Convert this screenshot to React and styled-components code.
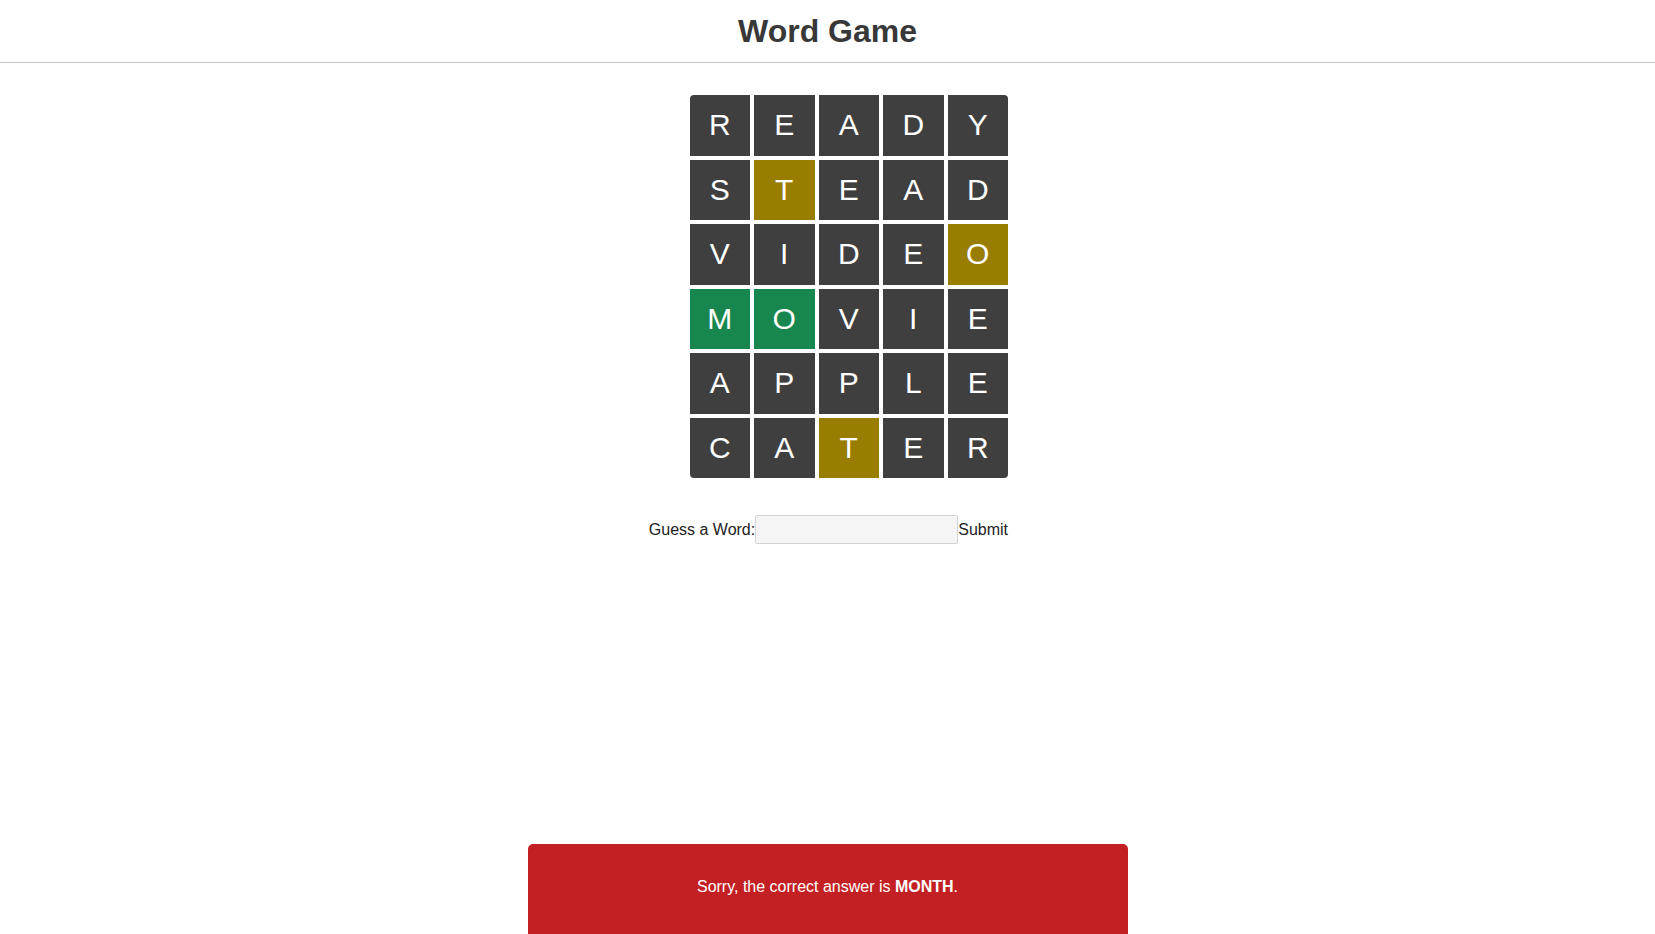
import styled, { createGlobalStyle } from "styled-components";

const GlobalStyle = createGlobalStyle`
  body {
    margin: 0;
    font-family: "Liberation Sans", Arial, sans-serif;
    background: #ffffff;
    color: #222;
    overflow: hidden;
  }
`;

const guesses = [
  ["READY", "....."],
  ["STEAD", ".y..."],
  ["VIDEO", "....y"],
  ["MOVIE", "gg..."],
  ["APPLE", "....."],
  ["CATER", "..y.."],
];

const tileColors = {
  ".": "#3f3f3f",
  y: "#997d00",
  g: "#18874f",
};

const App = () => {
  return (
    <Page>
      <GlobalStyle />
      <Header>
        <Title>Word Game</Title>
      </Header>
      <Main>
        <Board>
          {guesses.map(([word, marks], r) =>
            word.split("").map((ch, c) => (
              <Tile key={`${r}-${c}`} $state={marks[c]}>
                {ch}
              </Tile>
            ))
          )}
        </Board>
        <GuessForm onSubmit={(e) => e.preventDefault()}>
          <Label htmlFor="guess">Guess a Word:</Label>
          <GuessInput id="guess" type="text" />
          <SubmitButton type="submit">Submit</SubmitButton>
        </GuessForm>
      </Main>
      <Banner>
        <span>
          Sorry, the correct answer is <strong>MONTH</strong>.
        </span>
      </Banner>
    </Page>
  );
};

export default App;

const Page = styled.div`
  display: flex;
  flex-direction: column;
  height: 934px;
`;

const Header = styled.header`
  height: 63px;
  border-bottom: 1px solid #c4c4c4;
  display: flex;
  align-items: center;
  justify-content: center;
  box-sizing: border-box;
`;

const Title = styled.h1`
  margin: 0;
  font-size: 32px;
  font-weight: bold;
  color: #383838;
  padding-top: 1px;
`;

const Main = styled.main`
  width: 361px;
  margin: 32px auto 0;
  display: flex;
  flex-direction: column;
  align-items: flex-end;
`;

const Board = styled.div`
  display: grid;
  grid-template-columns: repeat(5, 60.5px);
  grid-auto-rows: 60.5px;
  gap: 4px;
  border-radius: 4px;
  overflow: hidden;
`;

const Tile = styled.div`
  display: flex;
  align-items: center;
  justify-content: center;
  background: ${(p) => tileColors[p.$state]};
  color: #ffffff;
  font-size: 30px;
`;

const GuessForm = styled.form`
  margin-top: 37px;
  display: flex;
  align-items: center;
  font-size: 16px;
  white-space: nowrap;
`;

const Label = styled.label`
  color: #222;
  flex-shrink: 0;
`;

const GuessInput = styled.input`
  width: 203px;
  height: 29px;
  flex-shrink: 0;
  box-sizing: border-box;
  border: 1px solid #d4d4d4;
  border-radius: 2px;
  background: #f5f5f5;
  padding: 0 6px;
  font-family: inherit;
  font-size: 16px;
`;

const SubmitButton = styled.button`
  border: none;
  background: none;
  padding: 0;
  flex-shrink: 0;
  font-family: inherit;
  font-size: 16px;
  color: #222;
  cursor: pointer;
`;

const Banner = styled.div`
  width: 600px;
  margin: auto auto 0;
  height: 90px;
  box-sizing: border-box;
  padding-bottom: 4px;
  background: #c32024;
  border-radius: 5px 5px 0 0;
  color: #ffffff;
  font-size: 16px;
  display: flex;
  align-items: center;
  justify-content: center;
`;
